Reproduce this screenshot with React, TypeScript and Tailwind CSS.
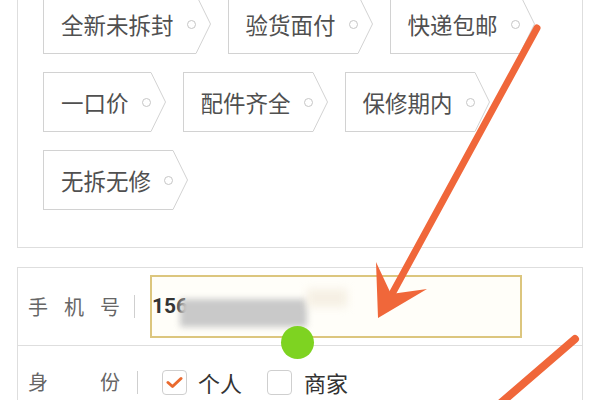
import React from "react";

const tagRows = [
  ["全新未拆封", "验货面付", "快递包邮"],
  ["一口价", "配件齐全", "保修期内"],
  ["无拆无修"],
];

function Tag({ label }: { label: string }) {
  return (
    <div className="flex h-[60px]">
      <div className="flex items-center border-y border-l border-[#d2d2d2] pl-[17px]">
        <span className="text-[22.5px] leading-none text-[#505050]">{label}</span>
        <span className="ml-[13px] h-[9px] w-[9px] rounded-full border-[1.5px] border-[#c6c6c6]" />
      </div>
      <svg width="15" height="60" viewBox="0 0 15 60" className="shrink-0">
        <polyline points="0,0.5 14.5,30 0,59.5" fill="none" stroke="#d2d2d2" strokeWidth="1" />
      </svg>
    </div>
  );
}

export default function App() {
  return (
    <div
      className="relative h-[400px] w-[600px] overflow-hidden bg-white"
      style={{ fontFamily: '"Noto Sans CJK SC", "Noto Sans", sans-serif' }}
    >
      {/* Tags card */}
      <div className="mx-[17px] -mt-[20px] border border-[#dedede] px-[25px] pb-[37px] pt-[13px]">
        <div className="flex flex-col gap-[18px]">
          {tagRows.map((row, i) => (
            <div key={i} className="flex gap-[17px]">
              {row.map((t) => (
                <Tag key={t} label={t} />
              ))}
            </div>
          ))}
        </div>
      </div>

      {/* Form card */}
      <div className="mx-[17px] mt-[19px] border border-[#dedede]">
        <div className="flex h-[78px] items-center border-b border-[#dedede] pl-[10px]">
          <div className="flex w-[92px] justify-between text-[20px] text-[#666]">
            <span>手</span>
            <span>机</span>
            <span>号</span>
          </div>
          <div className="ml-[14px] h-[23px] w-px bg-[#cfcfcf]" />
          <div className="ml-[15px] flex h-[63px] w-[372px] items-center border-2 border-[#dcc67e] bg-[#fffef9]">
            <span
              className="text-[21px] font-bold text-[#333]"
              style={{ fontFamily: "Roboto, sans-serif" }}
            >
              156
            </span>
            <div className="-ml-[8px] mt-[12px] h-[28px] w-[127px] bg-[#c9c9c9] blur-[3px]" />
            <div className="-mt-[18px] h-[18px] w-[40px] bg-[#f6f0e4] blur-[4px]" />
          </div>
        </div>
        <div className="flex h-[72px] items-center pl-[10px]">
          <div className="flex w-[92px] justify-between text-[20px] text-[#666]">
            <span>身</span>
            <span>份</span>
          </div>
          <div className="ml-[17px] h-[23px] w-px bg-[#cfcfcf]" />
          <div className="ml-[24px] flex h-[25px] w-[25px] items-center justify-center rounded-[4px] border border-[#cfcfcf]">
            <svg width="17" height="13" viewBox="0 0 17 13">
              <polyline
                points="2,6.5 6.5,10.5 15,2.5"
                fill="none"
                stroke="#ea6a2e"
                strokeWidth="3"
                strokeLinecap="round"
                strokeLinejoin="round"
              />
            </svg>
          </div>
          <span className="ml-[11px] text-[22px] text-[#333]">个人</span>
          <div className="ml-[25px] h-[25px] w-[25px] rounded-[4px] border border-[#cfcfcf]" />
          <span className="ml-[12px] text-[22px] text-[#333]">商家</span>
        </div>
      </div>

      {/* green touch marker */}
      <div className="absolute left-[281px] top-[326px] h-[33px] w-[33px] rounded-full bg-[#7ed321]" />

      {/* annotation arrows */}
      <svg className="pointer-events-none absolute inset-0" width="600" height="400" viewBox="0 0 600 400">
        <line x1="537" y1="28" x2="392" y2="294" stroke="#f0673a" strokeWidth="7" strokeLinecap="round" />
        <polygon points="378,318 376,262 391,294 427,289" fill="#f0673a" />
        <line x1="575" y1="339" x2="495" y2="408" stroke="#f0673a" strokeWidth="8" strokeLinecap="round" />
      </svg>
    </div>
  );
}
